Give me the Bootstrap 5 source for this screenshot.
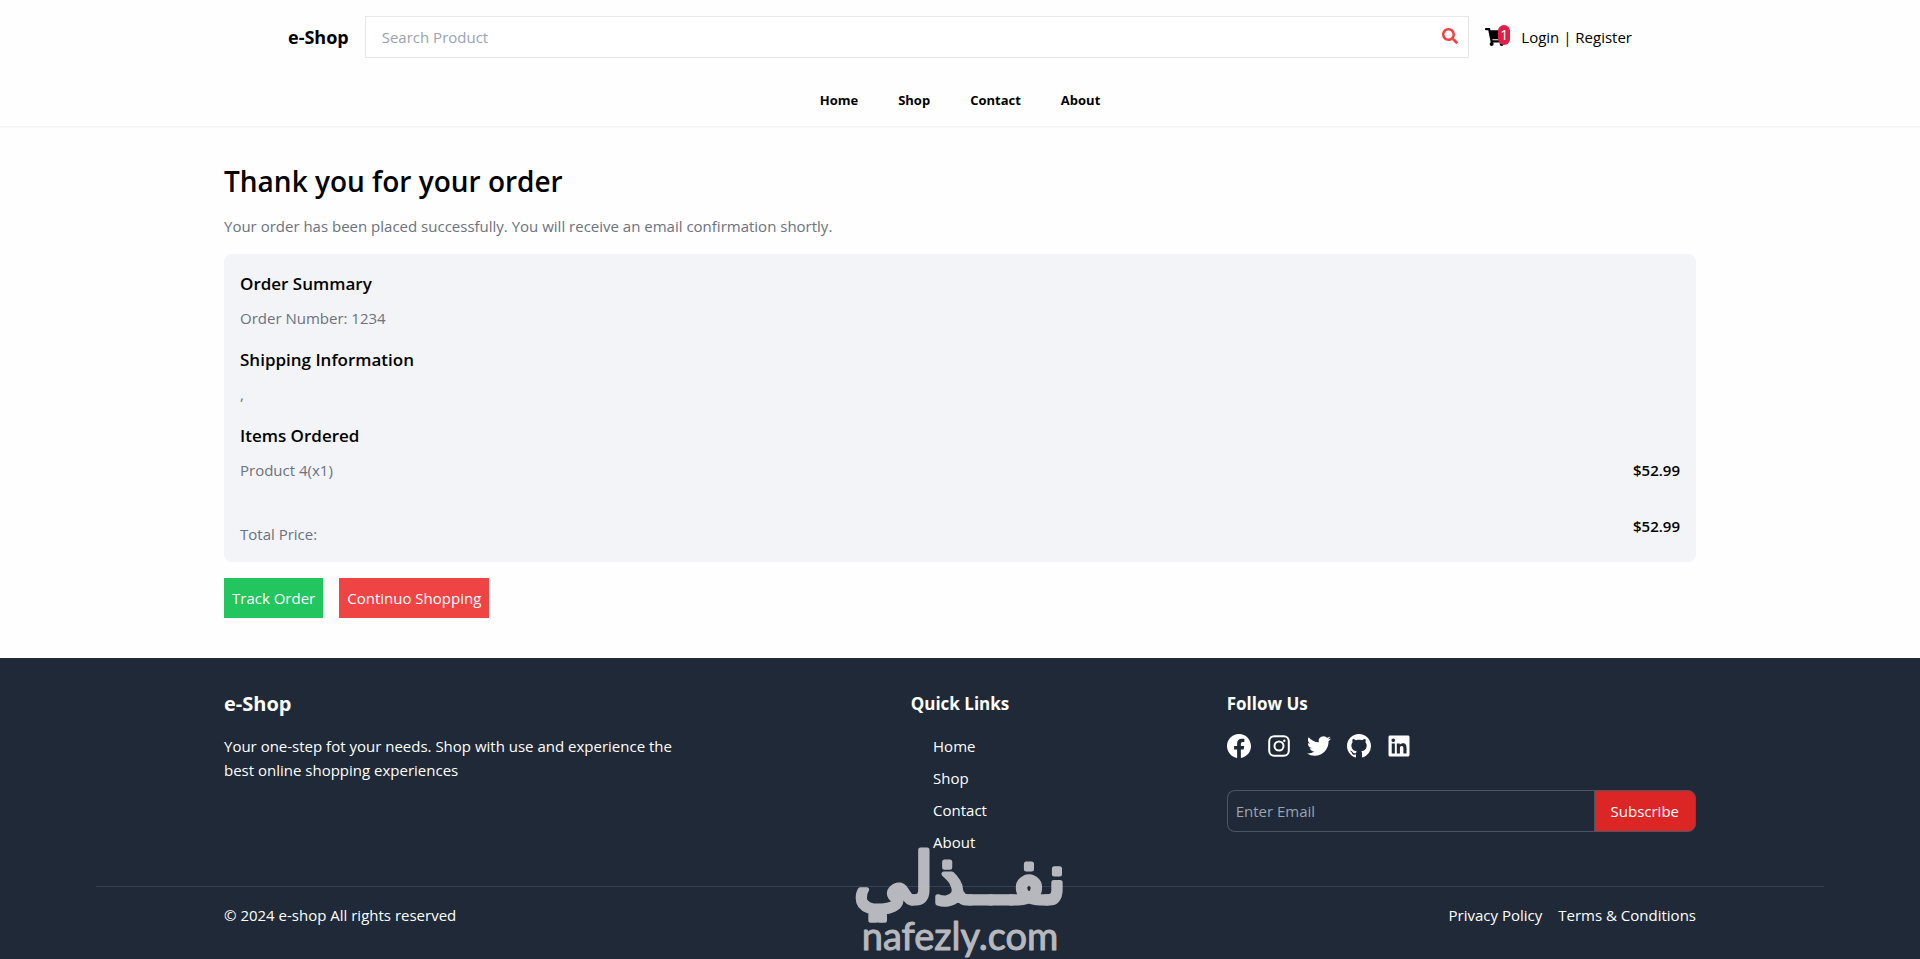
<!DOCTYPE html>
<html lang="en">
<head>
<meta charset="utf-8">
<meta name="viewport" content="width=device-width, initial-scale=1">
<title>e-Shop | Order confirmation</title>
<link href="https://cdn.jsdelivr.net/npm/bootstrap@5.3.0/dist/css/bootstrap.min.css" rel="stylesheet">
<style>
  body { font-family: "Open Sans", "Noto Sans", sans-serif; font-size: 15px; line-height: 24px; color: #000; background: #fefefe; }
  a { color: inherit; text-decoration: none; }
  .shell { max-width: 1536px; }
  .pad-header { padding-left: 96px; padding-right: 96px; }
  .pad-main { padding-left: 32px; padding-right: 32px; }
  .site-header { background: #fefefe; box-shadow: 0 1px 2px rgba(0,0,0,.05); }
  .brand { font-size: 18px; font-weight: 700; }
  .search-box .form-control { height: 42px; padding: 8px 40px 8px 16px; border: 1px solid #e5e7eb; font-size: 15px; background: #fff; }
  .form-control::placeholder { color: #9ca3af; opacity: 1; }
  .search-btn { top: 12px; right: 11px; color: #ef4444; line-height: 16px; display: flex; }
  .cart-link { width: 20px; }
  .cart-count { top: -3px; left: 13px; width: 12px; height: 20px; font-size: 14px; line-height: 20px; background: #e11d48; }
  .main-nav { gap: 40px; font-size: 13px; line-height: 20px; font-weight: 700; }
  .page-title { font-size: 28px; line-height: 36px; font-weight: 600; margin-bottom: 15px; }
  .order-main { padding-top: 37px; padding-bottom: 40px; }
  .soft { color: #6b7280; }
  .order-card { background: #f3f4f7; border-radius: 8px; }
  .sub-title { font-size: 17px; line-height: 28px; font-weight: 600; margin-bottom: 8px; }
  .price { font-weight: 600; }
  .btn-flat { padding: 8px; font-size: 15px; line-height: 24px; border: 0; border-radius: 0; color: #fff; }
  .btn-flat:hover { color: #fff; opacity: .9; }
  .btn-track { background: #22c55e; }
  .btn-shop { background: #ef4444; }
  .site-footer { background: #1f2937; color: #fff; padding-top: 32px; padding-bottom: 32px; }
  .footer-cols { --bs-gutter-x: 32px; }
  .foot-brand { font-size: 20px; line-height: 28px; font-weight: 700; margin-bottom: 16px; }
  .foot-title { font-size: 17px; line-height: 28px; font-weight: 700; margin-bottom: 16px; }
  .social { gap: 16px; height: 24px; margin-bottom: 32px; }
  .mail-box .form-control { height: 42px; padding: 8px; font-size: 15px; color: #fff; background: transparent; border: 1px solid #4b5563; border-right: 0; border-radius: 8px 0 0 8px; }
  .mail-box .btn { padding: 8px 16px; font-size: 15px; line-height: 24px; color: #fff; background: #dc2626; border: 1px solid #4b5563; border-radius: 0 8px 8px 0; }
  .rule-wrap { margin: 32px 96px 0; border-top: 1px solid #374151; padding-top: 16px; }
  .watermark { left: 50%; bottom: 0; transform: translateX(-50%); pointer-events: none; }
</style>
</head>
<body>
<header class="site-header">
  <div class="container-fluid shell pad-header pt-3 pb-3 d-flex align-items-center gap-3">
    <a class="brand" href="#">e-Shop</a>
    <form class="search-box position-relative flex-grow-1">
      <input class="form-control rounded-0" type="text" placeholder="Search Product" aria-label="Search Product">
      <button class="search-btn btn p-0 border-0 position-absolute" type="button" aria-label="Search">
        <svg width="16" height="16" viewBox="0 0 512 512" fill="currentColor"><path d="M505 442.700 405.300 343c-4.500-4.500-10.600-7-17-7H372c27.600-35.300 44-79.700 44-128C416 93.100 322.900 0 208 0S0 93.100 0 208s93.100 208 208 208c48.300 0 92.700-16.400 128-44v16.300c0 6.400 2.500 12.500 7 17l99.700 99.700c9.400 9.400 24.600 9.400 33.900 0l28.300-28.300c9.400-9.400 9.400-24.600.1-34zM208 336c-70.700 0-128-57.200-128-128 0-70.700 57.200-128 128-128 70.700 0 128 57.200 128 128 0 70.700-57.200 128-128 128z"/></svg>
      </button>
    </form>
    <a class="cart-link position-relative d-flex" href="#" aria-label="Cart">
      <svg width="20" height="18" viewBox="0 0 576 512" fill="currentColor"><path d="M528.100 301.300l47.300-208C578.800 78.300 567.400 64 552 64H159.200l-9.200-44.800C147.800 8 137.900 0 126.500 0H24C10.700 0 0 10.700 0 24v16c0 13.300 10.700 24 24 24h69.900l70.200 343.400C147.300 417.100 136 435.200 136 456c0 30.900 25.100 56 56 56s56-25.100 56-56c0-15.700-6.400-29.800-16.800-40h209.600C430.400 426.200 424 440.300 424 456c0 30.900 25.100 56 56 56s56-25.100 56-56c0-22.200-12.900-41.300-31.600-50.400l5.500-24.300c3.400-15-8-29.300-23.400-29.300H218.100l-6.500-32h293.100c11.200 0 20.900-7.800 23.400-18.700z"/></svg>
      <span class="cart-count position-absolute rounded-pill text-white text-center">1</span>
    </a>
    <a href="#">Login | Register</a>
  </div>
  <nav class="main-nav d-flex justify-content-center pb-3 pt-3">
    <a href="#">Home</a><a href="#">Shop</a><a href="#">Contact</a><a href="#">About</a>
  </nav>
</header>

<main class="container-fluid shell pad-main order-main">
  <h1 class="page-title">Thank you for your order</h1>
  <p class="soft mb-3">Your order has been placed successfully. You will receive an email confirmation shortly.</p>
  <section class="order-card p-3 mb-3">
    <h2 class="sub-title">Order Summary</h2>
    <p class="soft mb-3">Order Number: 1234</p>
    <h2 class="sub-title">Shipping Information</h2>
    <p class="soft mb-3">,</p>
    <h2 class="sub-title">Items Ordered</h2>
    <div class="d-flex justify-content-between mb-3">
      <span class="soft">Product 4(x1)</span><span class="price">$52.99</span>
    </div>
    <div class="d-flex justify-content-between pt-3">
      <span class="soft pt-2">Total Price:</span><span class="price">$52.99</span>
    </div>
  </section>
  <div class="d-flex gap-3">
    <button class="btn btn-flat btn-track" type="button">Track Order</button>
    <button class="btn btn-flat btn-shop" type="button">Continuo Shopping</button>
  </div>
</main>

<footer class="site-footer position-relative">
  <div class="container-fluid shell pad-main">
    <div class="row footer-cols">
      <div class="col-4">
        <h2 class="foot-brand">e-Shop</h2>
        <p class="mb-0">Your one-step fot your needs. Shop with use and experience the best online shopping experiences</p>
      </div>
      <div class="col-4 d-flex flex-column align-items-center">
        <h2 class="foot-title">Quick Links</h2>
        <ul class="list-unstyled d-flex flex-column gap-2 mb-0">
          <li><a href="#">Home</a></li><li><a href="#">Shop</a></li><li><a href="#">Contact</a></li><li><a href="#">About</a></li>
        </ul>
      </div>
      <div class="col-4">
        <h2 class="foot-title">Follow Us</h2>
        <div class="social d-flex align-items-center">
          <a class="d-flex" href="#" aria-label="Facebook"><svg width="24" height="24" viewBox="0 0 16 16" fill="currentColor"><path d="M16 8.049c0-4.446-3.582-8.050-8-8.050C3.580 0-.002 3.603-.002 8.050c0 4.017 2.926 7.347 6.750 7.951v-5.625h-2.030V8.050H6.750V6.275c0-2.017 1.195-3.131 3.022-3.131.876 0 1.791.157 1.791.157v1.980h-1.009c-.993 0-1.303.621-1.303 1.258v1.510h2.218l-.354 2.326H9.250V16c3.824-.604 6.750-3.934 6.750-7.951z"/></svg></a>
          <a class="d-flex" href="#" aria-label="Instagram"><svg width="24" height="24" viewBox="0 0 24 24" fill="none" stroke="currentColor" stroke-width="2"><rect x="2.200" y="2.200" width="19.600" height="19.600" rx="5"/><circle cx="12" cy="12" r="4.500"/><circle cx="17.300" cy="6.700" r="1.200" fill="currentColor" stroke="none"/></svg></a>
          <a class="d-flex" href="#" aria-label="Twitter"><svg width="24" height="24" viewBox="0 0 24 24" fill="currentColor"><path d="M23.953 4.570a10 10 0 0 1-2.825.775 4.958 4.958 0 0 0 2.163-2.723c-.951.555-2.005.959-3.127 1.184a4.920 4.920 0 0 0-8.384 4.482C7.690 8.095 4.067 6.130 1.640 3.162a4.822 4.822 0 0 0-.666 2.475c0 1.710.870 3.213 2.188 4.096a4.904 4.904 0 0 1-2.228-.616v.060a4.923 4.923 0 0 0 3.946 4.827 4.996 4.996 0 0 1-2.212.085 4.936 4.936 0 0 0 4.604 3.417 9.867 9.867 0 0 1-6.102 2.105c-.390 0-.779-.023-1.170-.067a13.995 13.995 0 0 0 7.557 2.209c9.053 0 13.998-7.496 13.998-13.985 0-.210 0-.420-.015-.630A9.935 9.935 0 0 0 24 4.590z"/></svg></a>
          <a class="d-flex" href="#" aria-label="GitHub"><svg width="24" height="24" viewBox="0 0 16 16" fill="currentColor"><path d="M8 0C3.580 0 0 3.580 0 8c0 3.540 2.290 6.530 5.470 7.590.400.070.550-.170.550-.380 0-.190-.010-.820-.010-1.490-2.010.370-2.530-.490-2.690-.940-.090-.230-.480-.940-.820-1.130-.280-.150-.680-.520-.010-.530.630-.010 1.080.580 1.230.820.720 1.210 1.870.870 2.330.660.070-.520.280-.870.510-1.070-1.780-.200-3.640-.890-3.640-3.950 0-.870.310-1.590.820-2.150-.080-.200-.360-1.020.080-2.120 0 0 .670-.210 2.200.820.640-.180 1.320-.270 2-.270s1.360.090 2 .270c1.530-1.040 2.200-.820 2.200-.820.440 1.100.160 1.920.080 2.120.510.560.820 1.270.820 2.150 0 3.070-1.870 3.750-3.650 3.950.290.250.540.730.540 1.480 0 1.070-.010 1.930-.010 2.200 0 .210.150.460.550.380A8.010 8.010 0 0 0 16 8c0-4.420-3.580-8-8-8z"/></svg></a>
          <a class="d-flex" href="#" aria-label="LinkedIn"><svg width="24" height="24" viewBox="0 0 448 512" fill="currentColor"><path d="M416 32H31.900C14.300 32 0 46.500 0 64.300v383.400C0 465.500 14.300 480 31.900 480H416c17.600 0 32-14.500 32-32.300V64.300c0-17.800-14.400-32.300-32-32.300zM135.400 416H69V202.200h66.500V416zm-33.200-243c-21.300 0-38.500-17.300-38.500-38.500S80.900 96 102.200 96c21.200 0 38.500 17.300 38.500 38.500 0 21.300-17.200 38.500-38.500 38.500zm282.100 243h-66.400V312c0-24.800-.5-56.700-34.500-56.700-34.600 0-39.900 27-39.900 54.900V416h-66.400V202.200h63.700v29.200h.9c8.900-16.800 30.600-34.500 62.900-34.500 67.200 0 79.700 44.300 79.700 101.900V416z"/></svg></a>
        </div>
        <form class="mail-box d-flex">
          <input class="form-control" type="email" placeholder="Enter Email" aria-label="Enter Email">
          <button class="btn" type="button">Subscribe</button>
        </form>
      </div>
    </div>
  </div>
  <div class="rule-wrap">
    <div class="container-fluid shell pad-main d-flex justify-content-between">
      <span>© 2024 e-shop All rights reserved</span>
      <div class="d-flex gap-3"><a href="#">Privacy Policy</a><a href="#">Terms &amp; Conditions</a></div>
    </div>
  </div>
  <svg class="watermark position-absolute" width="260" height="120" viewBox="0 0 260 120" fill="#c4c5ca" stroke="#c4c5ca" stroke-linejoin="round" opacity=".92" text-anchor="middle">
    <text x="130" y="64" font-family="DejaVu Sans, sans-serif" font-size="70" stroke-width="5" direction="rtl">نفــذلي</text>
    <text x="130" y="111" font-family="Lato, sans-serif" font-size="38" stroke-width="1">nafezly.com</text>
  </svg>
</footer>
<script src="https://cdn.jsdelivr.net/npm/bootstrap@5.3.0/dist/js/bootstrap.bundle.min.js"></script>
</body>
</html>
